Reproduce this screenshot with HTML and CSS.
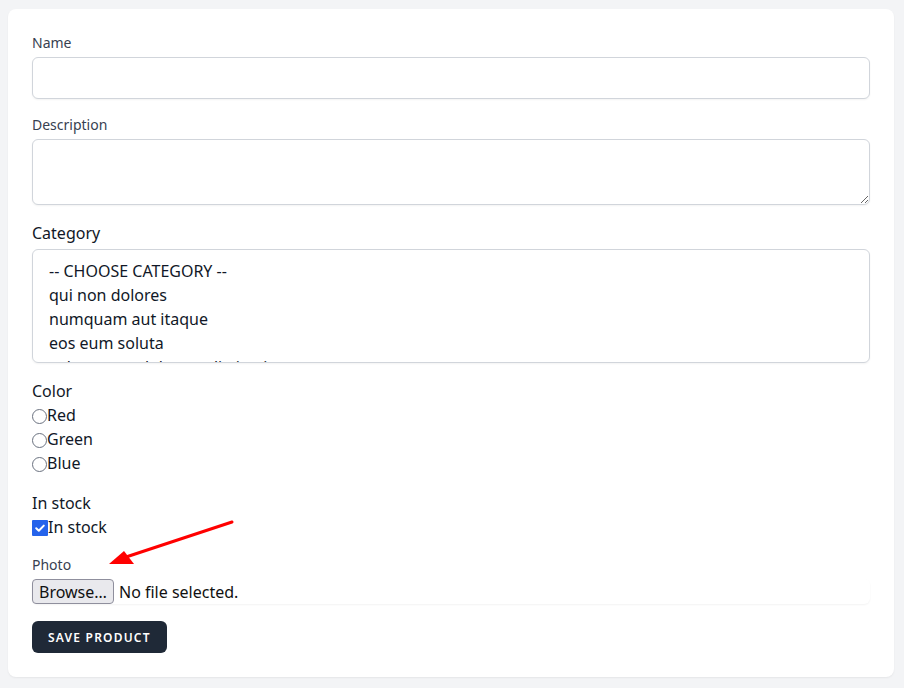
FILE: index.html
```html
<!DOCTYPE html>
<html lang="en">
<head>
<meta charset="utf-8">
<title>Product form</title>
<link rel="stylesheet" href="styles.css">
</head>
<body>
<div class="page">
  <form class="card">
    <div class="group">
      <label class="label-sm" for="name">Name</label>
      <input class="input" id="name" type="text">
    </div>
    <div class="group">
      <label class="label-sm" for="desc">Description</label>
      <textarea class="input textarea" id="desc"></textarea>
    </div>
    <div class="group">
      <label class="label-md">Category</label>
      <div class="listbox">
        <div class="opt">-- CHOOSE CATEGORY --</div>
        <div class="opt">qui non dolores</div>
        <div class="opt">numquam aut itaque</div>
        <div class="opt">eos eum soluta</div>
        <div class="opt">voluptatem dolorum distinctio</div>
      </div>
    </div>
    <div class="group">
      <div class="label-md">Color</div>
      <label class="choice"><span class="radio"></span>Red</label>
      <label class="choice"><span class="radio"></span>Green</label>
      <label class="choice"><span class="radio"></span>Blue</label>
    </div>
    <div class="group">
      <div class="label-md">In stock</div>
      <label class="choice"><span class="check"><svg viewBox="0 0 16 16" width="16" height="16"><path d="M4.2 8.3 L6.8 10.8 L11.8 5.6" fill="none" stroke="#fff" stroke-width="2" stroke-linecap="round" stroke-linejoin="round"/></svg></span>In stock</label>
    </div>
    <div class="group">
      <div class="label-sm">Photo</div>
      <div class="file">
        <span class="browse">Browse…</span>
        <span class="file-name">No file selected.</span>
      </div>
    </div>
    <div class="actions">
      <button type="button" class="btn">Save Product</button>
    </div>
  </form>
</div>
<svg class="arrow" width="904" height="688" viewBox="0 0 904 688">
  <line x1="232" y1="522" x2="126" y2="557" stroke="#ff0000" stroke-width="3" stroke-linecap="round"/>
  <polygon points="109,564 124,551 134,564" fill="#ff0000"/>
</svg>
</body>
</html>
```
FILE: styles.css
```css
html, body {
  margin: 0;
  padding: 0;
}
body {
  background: #f3f4f6;
  font-family: "Noto Sans", "Open Sans", sans-serif;
  color: #111827;
  position: relative;
  width: 904px;
  height: 688px;
  overflow: hidden;
}
.page {
  padding: 9px 10px 0 8px;
}
.card {
  background: #ffffff;
  border-radius: 8px;
  box-shadow: 0 1px 2px rgba(0,0,0,0.06);
  padding: 24px;
  display: flex;
  flex-direction: column;
  gap: 16px;
}
.group {
  display: flex;
  flex-direction: column;
}
.label-sm {
  font-size: 14px;
  line-height: 20px;
  color: #374151;
  margin-bottom: 4px;
}
.label-md {
  font-size: 16px;
  line-height: 24px;
  color: #111827;
}
.group > .label-md + .listbox {
  margin-top: 4px;
}
.input {
  box-sizing: border-box;
  height: 42px;
  width: 100%;
  border: 1px solid #d1d5db;
  border-radius: 6px;
  box-shadow: 0 1px 2px rgba(0,0,0,0.05);
  font: inherit;
  padding: 8px 12px;
  margin: 0;
  background: #fff;
}
.textarea {
  height: 66px;
  display: block;
  resize: vertical;
}
.listbox {
  box-sizing: border-box;
  height: 114px;
  border: 1px solid #d1d5db;
  border-radius: 6px;
  box-shadow: 0 1px 2px rgba(0,0,0,0.05);
  padding: 9px 16px 0 16px;
  overflow: hidden;
}
.opt {
  font-size: 16px;
  line-height: 24px;
  color: #111827;
  white-space: nowrap;
}
.choice {
  display: flex;
  align-items: center;
  font-size: 16px;
  line-height: 24px;
  color: #111827;
}
.radio {
  box-sizing: border-box;
  width: 15px;
  height: 15px;
  border: 1px solid #6b7280;
  border-radius: 50%;
  margin-top: 2px;
  background: #fff;
}
.check {
  width: 16px;
  height: 16px;
  background: #2563eb;
  border-radius: 1px;
  display: flex;
  margin-top: 2px;
}
.file {
  box-sizing: border-box;
  height: 25px;
  display: flex;
  align-items: center;
  gap: 5px;
  border-radius: 6px;
  box-shadow: 0 1px 2px rgba(0,0,0,0.05);
}
.browse {
  box-sizing: border-box;
  height: 25px;
  padding: 0 6px;
  display: flex;
  align-items: center;
  background: #e9e9ed;
  border: 1px solid #8f8f9d;
  border-radius: 4px;
  font-size: 16px;
  color: #111;
}
.file-name {
  font-size: 16px;
  color: #111;
}
.actions {
  display: flex;
  padding-top: 1px;
}
.btn {
  background: #1f2937;
  color: #fff;
  border: none;
  border-radius: 6px;
  height: 32px;
  padding: 0 16px;
  font-family: inherit;
  font-size: 12px;
  font-weight: 600;
  letter-spacing: 0.1em;
  text-transform: uppercase;
}
.arrow {
  position: absolute;
  left: 0;
  top: 0;
  pointer-events: none;
}
```
